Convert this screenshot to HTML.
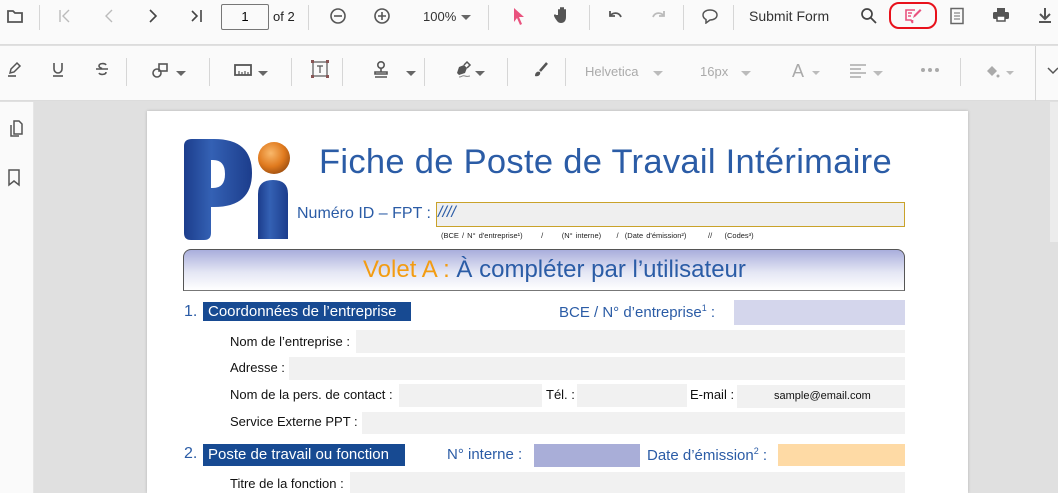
<!DOCTYPE html>
<html><head><meta charset="utf-8"><style>
*{margin:0;padding:0;box-sizing:border-box}
html{width:1058px;height:493px;overflow:hidden}
body{width:1058px;height:493px;overflow:hidden;position:relative;background:#e0e0e0;font-family:"Liberation Sans",Arial,sans-serif}
.a{position:absolute}
.tb1{left:0;top:0;width:1058px;height:45px;background:#fafafa;border-bottom:1px solid #dcdcdc}
.tb2{left:0;top:46px;width:1058px;height:55px;background:#fafafa;border-bottom:1px solid #dcdcdc}
.sep{position:absolute;width:1px;background:#d6d6d6}
.tb1 .sep{top:5px;height:25px}
.tb2 .sep{top:12px;height:28px}
.ic{position:absolute}
.lp{left:0;top:102px;width:34px;height:391px;background:#fafafa;border-right:1px solid #e6e6e6}
.page{left:147px;top:111px;width:821px;height:382px;background:#fff;box-shadow:0 0 3px rgba(0,0,0,.2);overflow:hidden}
.blue{color:#2b5ca6}
.t{position:absolute;white-space:nowrap}
.f{position:absolute;background:#f1f1f1}
.lbl{font-size:13px;color:#111}
.dd{position:absolute;width:0;height:0;border-left:5px solid transparent;border-right:5px solid transparent;border-top:5px solid #666}
.ddl{border-top-color:#bbb}
</style></head><body>

<div class="a tb1">
  <svg class="ic" style="left:6px;top:7px" width="18" height="18" viewBox="0 0 18 18"><path d="M2 4h5l2 2h7v9H2z" fill="none" stroke="#555" stroke-width="1.8"/></svg>
  <div class="sep" style="left:39px"></div>
  <svg class="ic" style="left:57px;top:8px" width="16" height="16"><path d="M3 2v12M12 2L6 8l6 6" fill="none" stroke="#bbb" stroke-width="1.4"/></svg>
  <svg class="ic" style="left:101px;top:8px" width="16" height="16"><path d="M11 2L5 8l6 6" fill="none" stroke="#bbb" stroke-width="1.4"/></svg>
  <svg class="ic" style="left:145px;top:8px" width="16" height="16"><path d="M5 2l6 6-6 6" fill="none" stroke="#444" stroke-width="1.6"/></svg>
  <svg class="ic" style="left:189px;top:8px" width="16" height="16"><path d="M3 3l5 5-5 5M12 2v12" fill="none" stroke="#444" stroke-width="1.6"/></svg>
  <div class="a" style="left:221px;top:4px;width:48px;height:26px;border:1px solid #777;border-radius:2px;font-size:13px;text-align:center;line-height:24px">1</div>
  <div class="t" style="left:273px;top:9px;font-size:13px;color:#222">of 2</div>
  <div class="sep" style="left:308px"></div>
  <svg class="ic" style="left:329px;top:7px" width="18" height="18"><circle cx="9" cy="9" r="7" fill="none" stroke="#555" stroke-width="1.6"/><path d="M5 9h8" stroke="#555" stroke-width="1.6"/></svg>
  <svg class="ic" style="left:373px;top:7px" width="18" height="18"><circle cx="9" cy="9" r="7" fill="none" stroke="#555" stroke-width="1.6"/><path d="M5 9h8M9 5v8" stroke="#555" stroke-width="1.6"/></svg>
  <div class="t" style="left:423px;top:9px;font-size:13px;color:#333">100%</div>
  <div class="dd" style="left:461px;top:15px"></div>
  <div class="sep" style="left:488px"></div>
  <svg class="ic" style="left:511px;top:6px" width="16" height="20"><path d="M3 2l10 9-5 0 3 7-2 1-3-7-3 4z" fill="#e9527e"/></svg>
  <svg class="ic" style="left:554px;top:5px" width="18" height="20"><path d="M4 10V5a1 1 0 012 0v4V3a1 1 0 012 0v6V3a1 1 0 012 0v6V5a1 1 0 012 0v7c0 4-2 6-5 6s-4-2-6-5l-1-2a1 1 0 012-1z" fill="#555"/></svg>
  <div class="sep" style="left:589px"></div>
  <svg class="ic" style="left:606px;top:8px" width="18" height="16"><path d="M4 8c3-4 9-4 11 1M4 3v5h5" fill="none" stroke="#555" stroke-width="1.8"/></svg>
  <svg class="ic" style="left:650px;top:8px" width="18" height="16"><path d="M14 8c-3-4-9-4-11 1M14 3v5H9" fill="none" stroke="#bbb" stroke-width="1.8"/></svg>
  <div class="sep" style="left:683px"></div>
  <svg class="ic" style="left:701px;top:8px" width="18" height="16"><path d="M9 2c4 0 7 2 7 5s-3 5-7 5l-4 3v-3.5C3 10.5 2 9 2 7c0-3 3-5 7-5z" fill="none" stroke="#555" stroke-width="1.5"/></svg>
  <div class="sep" style="left:733px"></div>
  <div class="t" style="left:749px;top:8px;font-size:14px;color:#333">Submit Form</div>
  <svg class="ic" style="left:860px;top:7px" width="18" height="18"><circle cx="7" cy="7" r="5" fill="none" stroke="#444" stroke-width="1.7"/><path d="M11 11l5 5" stroke="#444" stroke-width="1.8"/></svg>
  <div class="a" style="left:889px;top:2px;width:48px;height:27px;border:2.5px solid #e8111b;border-radius:10px"></div>
  <svg class="ic" style="left:904px;top:7px" width="18" height="18"><path d="M11 3H2v10h5l1.5 3V13" fill="none" stroke="#e9527e" stroke-width="1.6"/><path d="M4 6h4M4 9h3" stroke="#e9527e" stroke-width="1.5"/><path d="M9 11l1-3 6-6 1.5 1.5-6 6z" fill="#e9527e"/></svg>
  <svg class="ic" style="left:949px;top:7px" width="16" height="18"><rect x="2" y="1.5" width="12" height="15" fill="none" stroke="#666" stroke-width="1.5"/><path d="M5 6h6M5 9h6M5 12h6" stroke="#888" stroke-width="1.3"/></svg>
  <svg class="ic" style="left:992px;top:7px" width="18" height="16"><rect x="5" y="1" width="8" height="4" fill="#555"/><rect x="1" y="5" width="16" height="7" rx="1.5" fill="#555"/><rect x="5" y="9" width="8" height="5" fill="#fff" stroke="#555" stroke-width="1.5"/></svg>
  <svg class="ic" style="left:1037px;top:6px" width="16" height="18"><path d="M8 2v10M3 8l5 5 5-5" fill="none" stroke="#555" stroke-width="2"/><path d="M2 16h12" stroke="#555" stroke-width="2"/></svg>
</div>

<div class="a tb2">
  <svg class="ic" style="left:6px;top:15px" width="16" height="18"><path d="M4 12l1-4 6-6 3 3-6 6z" fill="none" stroke="#555" stroke-width="1.5"/><path d="M2 15h8" stroke="#555" stroke-width="1.6"/></svg>
  <svg class="ic" style="left:50px;top:15px" width="16" height="18"><path d="M4 2v6a4 4 0 008 0V2" fill="none" stroke="#555" stroke-width="1.6"/><path d="M3 15h10" stroke="#555" stroke-width="1.6"/></svg>
  <svg class="ic" style="left:94px;top:15px" width="16" height="18"><path d="M12 4c-1-2-7-2-7 1 0 1.5 2 2 3 2.5M5 12c1 2 7 2 7-1" fill="none" stroke="#555" stroke-width="1.6"/><path d="M2 8h12" stroke="#555" stroke-width="1.5"/></svg>
  <div class="sep" style="left:126px"></div>
  <svg class="ic" style="left:151px;top:15px" width="20" height="18"><circle cx="6" cy="12" r="4" fill="none" stroke="#555" stroke-width="1.6"/><rect x="8" y="3" width="8" height="7" fill="none" stroke="#555" stroke-width="1.6"/></svg>
  <div class="dd" style="left:176px;top:25px"></div>
  <div class="sep" style="left:209px"></div>
  <svg class="ic" style="left:234px;top:17px" width="18" height="14"><rect x="1" y="2" width="16" height="10" fill="none" stroke="#555" stroke-width="1.8"/><path d="M5 12V8M8 12V9M11 12V8M14 12V9" stroke="#555" stroke-width="1.2"/></svg>
  <div class="dd" style="left:258px;top:25px"></div>
  <div class="sep" style="left:291px"></div>
  <svg class="ic" style="left:310px;top:13px" width="20" height="20"><rect x="3" y="3" width="14" height="14" fill="none" stroke="#555" stroke-width="1.2"/><path d="M7 7h6M10 7v7" stroke="#555" stroke-width="1.2"/><rect x="1" y="1" width="3" height="3" fill="#855"/><rect x="16" y="1" width="3" height="3" fill="#855"/><rect x="1" y="16" width="3" height="3" fill="#855"/><rect x="16" y="16" width="3" height="3" fill="#855"/></svg>
  <div class="sep" style="left:342px"></div>
  <svg class="ic" style="left:372px;top:14px" width="18" height="20"><circle cx="9" cy="5" r="3.2" fill="none" stroke="#555" stroke-width="1.6"/><path d="M9 8v4M3 12h12v2H3zM3 17h12" fill="none" stroke="#555" stroke-width="1.6"/></svg>
  <div class="dd" style="left:406px;top:25px"></div>
  <div class="sep" style="left:424px"></div>
  <svg class="ic" style="left:454px;top:14px" width="20" height="20"><path d="M3 13l2-6 5-2 3 3-2 5-6 2z" fill="#555"/><path d="M10 5l3-3 3 3-3 3" fill="none" stroke="#555" stroke-width="1.5"/><path d="M5 17c3 0 3-2 6-1s3 0 5 0" fill="none" stroke="#888" stroke-width="1"/></svg>
  <div class="dd" style="left:475px;top:25px"></div>
  <div class="sep" style="left:507px"></div>
  <svg class="ic" style="left:532px;top:16px" width="18" height="16"><path d="M15 1L8 9" stroke="#555" stroke-width="2.5"/><path d="M3 14c0-4 3-5 5-4 1 3-2 5-5 4z" fill="#555"/></svg>
  <div class="sep" style="left:565px"></div>
  <div class="t" style="left:585px;top:18px;font-size:13px;color:#aaa">Helvetica</div>
  <div class="dd ddl" style="left:653px;top:25px"></div>
  <div class="t" style="left:700px;top:18px;font-size:13px;color:#aaa">16px</div>
  <div class="dd ddl" style="left:741px;top:25px"></div>
  <div class="t" style="left:792px;top:15px;font-size:18px;color:#aaa">A</div>
  <div class="dd ddl" style="left:812px;top:25px;border-width:4px 4px 0"></div>
  <svg class="ic" style="left:849px;top:17px" width="18" height="16"><path d="M1 2h16M1 6h11M1 10h16M1 14h11" stroke="#aaa" stroke-width="1.5"/></svg>
  <div class="dd ddl" style="left:873px;top:25px"></div>
  <svg class="ic" style="left:920px;top:21px" width="20" height="6"><circle cx="3" cy="3" r="2" fill="#aaa"/><circle cx="10" cy="3" r="2" fill="#aaa"/><circle cx="17" cy="3" r="2" fill="#aaa"/></svg>
  <div class="sep" style="left:960px"></div>
  <svg class="ic" style="left:984px;top:16px" width="18" height="18"><path d="M3 9l5-5 5 5-5 5z" fill="#aaa"/><circle cx="14" cy="14" r="1.5" fill="#aaa"/></svg>
  <div class="dd ddl" style="left:1006px;top:25px;border-width:4px 4px 0"></div>
  <div class="sep" style="left:1035px;top:0;height:55px"></div>
  <svg class="ic" style="left:1046px;top:20px" width="12" height="10"><path d="M2 2l5 5 5-5" fill="none" stroke="#555" stroke-width="1.5"/></svg>
</div>

<div class="a lp">
  <svg class="ic" style="left:6px;top:17px" width="18" height="20"><path d="M8 2h5l3 3v10H8z" fill="none" stroke="#555" stroke-width="1.5"/><path d="M5 6v11h8" fill="none" stroke="#555" stroke-width="1.5"/></svg>
  <svg class="ic" style="left:6px;top:66px" width="18" height="20"><path d="M3 2h10v15l-5-4-5 4z" fill="none" stroke="#555" stroke-width="1.5"/></svg>
</div>
<div class="a" style="left:1050px;top:102px;width:8px;height:140px;background:#ececec"></div>

<div class="a page">
  <svg class="a" style="left:35px;top:25px" width="112" height="108" viewBox="0 0 112 108">
    <defs><linearGradient id="g1" x1="0" x2="1"><stop offset="0" stop-color="#1c3d8c"/><stop offset=".4" stop-color="#3461b4"/><stop offset="1" stop-color="#1c3d8c"/></linearGradient>
    <radialGradient id="g2" cx=".4" cy=".35" r=".7"><stop offset="0" stop-color="#f9b86b"/><stop offset=".6" stop-color="#e07a1e"/><stop offset="1" stop-color="#9e4f10"/></radialGradient></defs>
    <path d="M2 10q0-7 8-7h22q38 0 38 34t-38 34h-3v26q0 7-7 7H9q-7 0-7-7z M29 24v28h2q12 0 12-14t-12-14z" fill="url(#g1)" fill-rule="evenodd"/>
    <circle cx="92" cy="22" r="16" fill="url(#g2)"/>
    <path d="M76 58q0-14 15-14t15 14v45H76z" fill="url(#g1)"/>
  </svg>
  <div class="t blue" style="left:172px;top:32px;font-size:34.5px;letter-spacing:0.3px">Fiche de Poste de Travail Intérimaire</div>
  <div class="t blue" style="left:150px;top:94px;font-size:16px">Numéro ID – FPT :</div>
  <div class="a" style="left:289px;top:91px;width:469px;height:25px;background:#efefef;border:1px solid #c9a22a"></div>
  <div class="t blue" style="left:291px;top:93px;font-size:16px;font-style:italic">////</div>
  <div class="t" style="left:294px;top:120px;font-size:7.5px;color:#222;word-spacing:1px">(BCE / N° d'entreprise¹)&nbsp;&nbsp;&nbsp;&nbsp;&nbsp;&nbsp;/&nbsp;&nbsp;&nbsp;&nbsp;&nbsp;&nbsp;(N° interne)&nbsp;&nbsp;&nbsp;&nbsp;&nbsp;/&nbsp;&nbsp;(Date d'émission²)&nbsp;&nbsp;&nbsp;&nbsp;&nbsp;&nbsp;&nbsp;//&nbsp;&nbsp;&nbsp;&nbsp;(Codes³)</div>
  <div class="a" style="left:36px;top:138px;width:722px;height:42px;border:1px solid #555;border-bottom-color:#777;border-radius:8px 8px 0 0;background:linear-gradient(#a9aedc,#e4e6f4 55%,#fff)"></div>
  <div class="t" style="left:216px;top:145px;font-size:24px;color:#f39c12">Volet A : <span class="blue">À compléter par l’utilisateur</span></div>

  <div class="t blue" style="left:37px;top:192px;font-size:16px">1.</div>
  <div class="a" style="left:56px;top:191px;width:208px;height:19px;background:#174a92"></div>
  <div class="t" style="left:61px;top:192px;font-size:15px;color:#fff">Coordonnées de l’entreprise</div>
  <div class="t blue" style="left:412px;top:192px;font-size:15px">BCE / N° d’entreprise<sup style="font-size:9px">1</sup> :</div>
  <div class="f" style="left:587px;top:189px;width:171px;height:25px;background:#d4d6ec"></div>

  <div class="t lbl" style="left:83px;top:223px">Nom de l’entreprise :</div>
  <div class="f" style="left:209px;top:219px;width:549px;height:23px"></div>
  <div class="t lbl" style="left:83px;top:249px">Adresse :</div>
  <div class="f" style="left:142px;top:246px;width:616px;height:23px"></div>
  <div class="t lbl" style="left:83px;top:276px">Nom de la pers. de contact :</div>
  <div class="f" style="left:252px;top:273px;width:143px;height:23px"></div>
  <div class="t lbl" style="left:399px;top:276px">Tél. :</div>
  <div class="f" style="left:430px;top:273px;width:110px;height:23px"></div>
  <div class="t lbl" style="left:543px;top:276px">E-mail :</div>
  <div class="f" style="left:590px;top:274px;width:168px;height:23px"></div>
  <div class="t" style="left:627px;top:279px;font-size:11px;color:#111">sample@email.com</div>
  <div class="t lbl" style="left:83px;top:303px">Service Externe PPT :</div>
  <div class="f" style="left:215px;top:301px;width:543px;height:22px"></div>

  <div class="t blue" style="left:37px;top:334px;font-size:16px">2.</div>
  <div class="a" style="left:56px;top:333px;width:202px;height:22px;background:#174a92"></div>
  <div class="t" style="left:61px;top:335px;font-size:15px;color:#fff">Poste de travail ou fonction</div>
  <div class="t blue" style="left:300px;top:335px;font-size:15px">N° interne :</div>
  <div class="f" style="left:387px;top:333px;width:106px;height:23px;background:#a9aed8"></div>
  <div class="t blue" style="left:500px;top:335px;font-size:15px">Date d’émission<sup style="font-size:9px">2</sup> :</div>
  <div class="f" style="left:631px;top:333px;width:127px;height:22px;background:#fedaa5"></div>

  <div class="t lbl" style="left:83px;top:365px">Titre de la fonction :</div>
  <div class="f" style="left:203px;top:361px;width:555px;height:24px"></div>
</div>
</body></html>
